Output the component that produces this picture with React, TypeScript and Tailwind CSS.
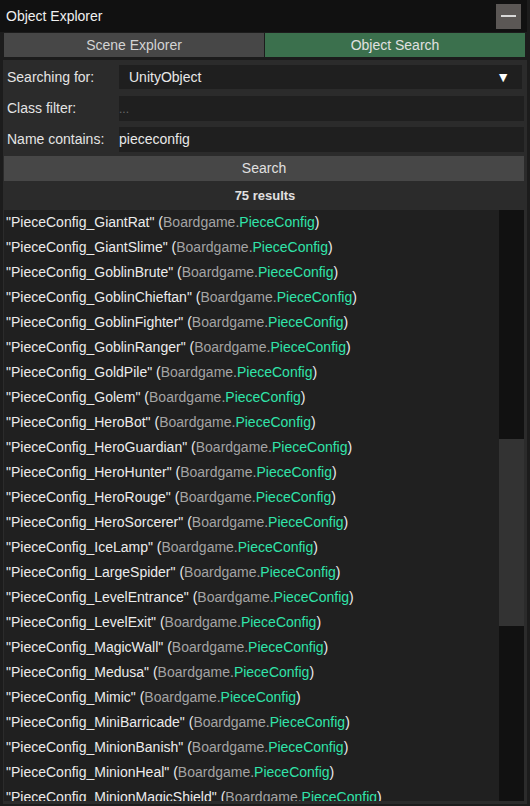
import React from "react";

const items = [
  "GiantRat",
  "GiantSlime",
  "GoblinBrute",
  "GoblinChieftan",
  "GoblinFighter",
  "GoblinRanger",
  "GoldPile",
  "Golem",
  "HeroBot",
  "HeroGuardian",
  "HeroHunter",
  "HeroRouge",
  "HeroSorcerer",
  "IceLamp",
  "LargeSpider",
  "LevelEntrance",
  "LevelExit",
  "MagicWall",
  "Medusa",
  "Mimic",
  "MiniBarricade",
  "MinionBanish",
  "MinionHeal",
  "MinionMagicShield",
];

export default function App() {
  return (
    <div
      className="w-[530px] h-[806px] bg-[#1c1c1c] overflow-hidden flex flex-col text-[14px] text-[#e4e4e4]"
      style={{ fontFamily: '"Liberation Sans", Arial, sans-serif' }}
    >
      {/* Title bar */}
      <div className="h-[32px] shrink-0 bg-[#111111] flex items-center pl-[6px] pr-[6px] mr-[3px]">
        <div className="flex-1 text-[#f0f0f0]">Object Explorer</div>
        <div className="w-[25px] h-[25px] bg-[#5b5755] flex items-center justify-center">
          <div className="w-[15px] h-[2px] bg-[#d8d8d8]" />
        </div>
      </div>

      {/* Tabs */}
      <div className="h-[26px] shrink-0 flex gap-[1px] pl-[4px] pr-[5px] pt-[1px]">
        <div className="flex-1 h-[24px] bg-[#474747] flex items-center justify-center text-[#d4d4d4]">
          Scene Explorer
        </div>
        <div className="flex-1 h-[24px] bg-[#3b704d] flex items-center justify-center text-[#e0e0e0]">
          Object Search
        </div>
      </div>

      {/* Body */}
      <div className="flex-1 flex flex-col bg-[#2b2b2b] ml-[3px] mr-[3px] mt-[2px] pt-[3px] min-h-0">
        {/* Searching for */}
        <div className="h-[24px] mt-[2px] flex items-center">
          <div className="w-[116px] pl-[4px] shrink-0">Searching for:</div>
          <div className="w-[403px] h-[24px] bg-[#1f1f1f] flex items-center pl-[10px] pr-[12px]">
            <span className="flex-1 text-[#e8e8e8]">UnityObject</span>
            <span className="text-white text-[14px]">▼</span>
          </div>
        </div>
        {/* Class filter */}
        <div className="h-[25px] mt-[7px] flex items-center">
          <div className="w-[116px] pl-[4px] shrink-0">Class filter:</div>
          <div className="w-[405px] h-[25px] bg-[#1f1f1f] flex items-center text-[#6a6a6a] text-[12px]">
            ...
          </div>
        </div>
        {/* Name contains */}
        <div className="h-[25px] mt-[6px] flex items-center">
          <div className="w-[116px] pl-[4px] shrink-0">Name contains:</div>
          <div className="w-[405px] h-[25px] bg-[#1f1f1f] flex items-center text-[#e8e8e8]">
            piececonfig
          </div>
        </div>
        {/* Search button */}
        <div className="h-[25px] mt-[4px] mx-[1px] w-[520px] bg-[#474747] flex items-center justify-center text-[#e0e0e0]">
          Search
        </div>
        {/* Results count */}
        <div className="h-[29px] flex items-center justify-center font-bold text-[13px] text-[#e0e0e0]">
          75 results
        </div>
        {/* List */}
        <div className="flex-1 flex ml-[1px] min-h-0 overflow-hidden">
          <div className="w-[495px] bg-[#202020] flex flex-col overflow-hidden">
            {items.map((n) => (
              <div key={n} className="h-[25px] shrink-0 flex items-center pl-[2px] whitespace-nowrap text-[#ececec]">
                <span>"PieceConfig_{n}" (</span>
                <span className="text-[#a4a4a4]">Boardgame.</span>
                <span className="text-[#30e4aa]">PieceConfig</span>
                <span>)</span>
              </div>
            ))}
          </div>
          <div className="w-[25px] bg-[#111111] flex flex-col">
            <div className="h-[229px] shrink-0" />
            <div className="h-[187px] shrink-0 bg-[#333333]" />
          </div>
        </div>
        <div className="h-[3px] shrink-0" />
      </div>
      <div className="h-[2px] shrink-0" />
    </div>
  );
}
